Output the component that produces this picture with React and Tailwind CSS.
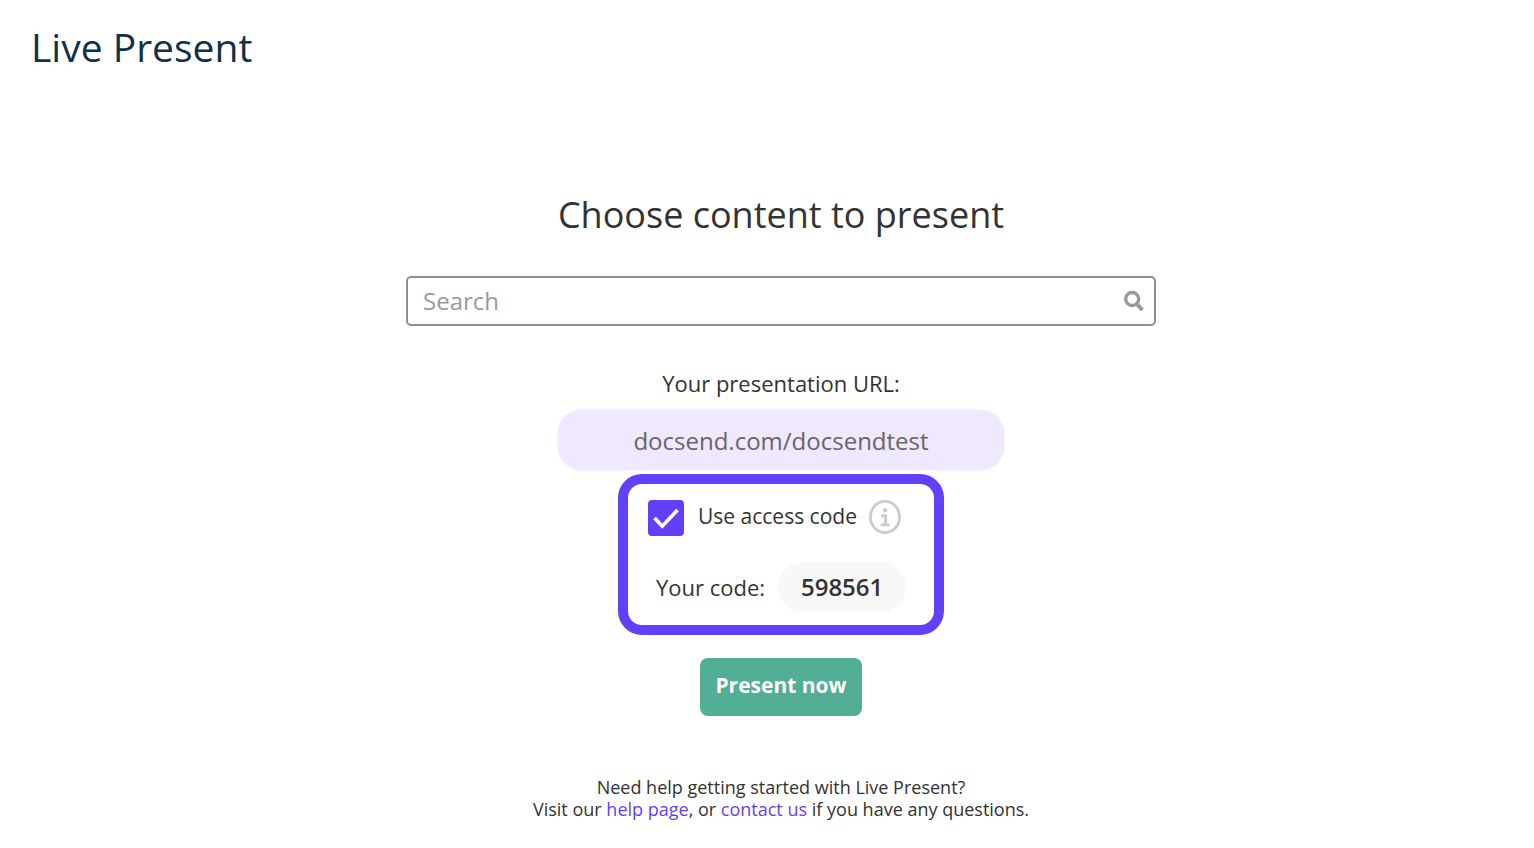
import React, { useState } from 'react';

const SearchIcon = () => (
    <svg className="w-5 h-[22px]" viewBox="0 0 20 22" fill="none" stroke="#999999" aria-hidden="true">
        <circle cx="8.2" cy="9" r="6.5" strokeWidth="3.4" />
        <path d="M12.8 14 L18.4 20" strokeWidth="4" />
    </svg>
);

const CheckIcon = () => (
    <svg className="absolute inset-0 w-9 h-9 pointer-events-none" viewBox="0 0 36 36" fill="none" stroke="#ffffff" aria-hidden="true">
        <path d="M6.5 18 L14.3 26.2 L29.5 10" strokeWidth="3.6" />
    </svg>
);

const InfoIcon = () => (
    <svg className="w-8 h-[34px]" viewBox="0 0 32 34" fill="none" stroke="#cccccc" aria-hidden="true">
        <ellipse cx="16" cy="17" rx="14.6" ry="15.6" strokeWidth="2.8" />
        <ellipse cx="16" cy="10.2" rx="2.1" ry="2.3" fill="#cccccc" stroke="none" />
        <path d="M13.4 15.8 H16.6 V24.8 M13 24.8 H19.2" strokeWidth="3" strokeLinecap="round" strokeLinejoin="round" />
    </svg>
);

const App = () => {
    const [search, setSearch] = useState('');
    const [useCode, setUseCode] = useState(true);

    return (
        <div className="min-h-screen bg-white text-[#333333] font-['Open_Sans','Noto_Sans',sans-serif]">
            <header className="px-[31px] pt-5">
                <h1 className="text-[39px] leading-[54px] text-[#11304a]">Live Present</h1>
            </header>

            <main className="flex flex-col items-center pl-7 pt-[114px]">
                <h2 className="text-4xl leading-[54px]">Choose content to present</h2>

                {/* Search */}
                <div className="mt-[34px] flex items-center w-full max-w-[750px] h-[50px] pl-[15px] pr-[10px] border-2 border-[#8f8e94] rounded-[5px]">
                    <input
                        type="text"
                        aria-label="Search"
                        placeholder="Search"
                        value={search}
                        onChange={(e) => setSearch(e.target.value)}
                        className="flex-1 min-w-0 text-2xl outline-none placeholder:text-[#999999]"
                    />
                    <button type="button" aria-label="Submit search">
                        <SearchIcon />
                    </button>
                </div>

                {/* Presentation URL */}
                <p className="mt-11 text-[22px] leading-[26px]">Your presentation URL:</p>
                <div className="mt-[14px] flex items-center justify-center w-full max-w-[446px] h-[60px] pt-[2px] rounded-3xl bg-[#f0e8fe] shadow-[0_0_3px_#e9e6ee] text-2xl text-[#666666]">
                    docsend.com/docsendtest
                </div>

                {/* Access code */}
                <div className="mt-1 w-[326px] pl-5 pt-4 pb-[13px] border-10 border-[#643ff9] rounded-3xl">
                    <div className="flex items-center">
                        <span className="relative w-9 h-9">
                            <input
                                id="access-code"
                                type="checkbox"
                                checked={useCode}
                                onChange={(e) => setUseCode(e.target.checked)}
                                className="block appearance-none w-9 h-9 rounded border-2 border-[#643ff9] checked:bg-[#643ff9]"
                            />
                            {useCode && <CheckIcon />}
                        </span>
                        <label htmlFor="access-code" className="ml-[14px] pb-1 text-[21px] leading-8">Use access code</label>
                        <button type="button" aria-label="About access codes" className="ml-3 pb-[2px]">
                            <InfoIcon />
                        </button>
                    </div>
                    <div className="mt-[26px] pl-2 flex items-center gap-[13px]">
                        <span className="text-[22px] leading-8">Your code:</span>
                        <span className="flex items-center justify-center w-32 h-[50px] rounded-full bg-[#f8f8f8] text-2xl font-semibold">
                            598561
                        </span>
                    </div>
                </div>

                <button type="button" className="mt-[23px] w-[162px] h-[58px] pb-[2px] rounded-lg bg-[#52ae94] text-white text-[21px] font-bold">
                    Present now
                </button>

                <p className="mt-[60px] pb-7 text-center text-lg leading-[22px]">
                    Need help getting started with Live Present?
                    <br />
                    Visit our <a href="#help" className="text-[#643ff9]">help page</a>, or{' '}
                    <a href="#contact" className="text-[#643ff9]">contact us</a> if you have any questions.
                </p>
            </main>
        </div>
    );
};

export default App;
